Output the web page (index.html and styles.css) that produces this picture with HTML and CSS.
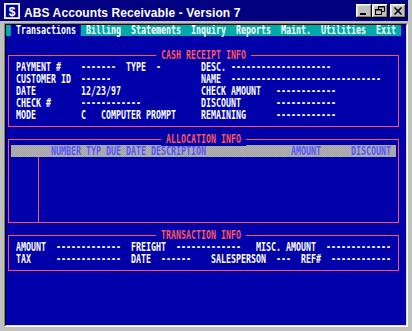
FILE: index.html
```html
<!DOCTYPE html>
<html lang="en">
<head>
  <meta charset="UTF-8">
  <title>ABS Accounts Receivable - Version 7</title>
  <link rel="stylesheet" href="styles.css">
</head>
<body>

  <div class="window">
    <div class="titlebar">
      <svg class="app-icon" viewBox="0 0 16 16" width="16" height="16">
        <rect x="0.5" y="0.5" width="15" height="15" fill="#c0c0c0" stroke="#fff"/>
        <rect x="2" y="2" width="12" height="12" fill="#0000aa"/>
        <text x="8" y="13" font-size="12" font-weight="bold" text-anchor="middle" fill="#fff" font-family="Liberation Sans, sans-serif">$</text>
      </svg>
      <span class="title">ABS Accounts Receivable - Version 7</span>
      <div class="caption-btns">
        <span class="btn">
          <svg viewBox="0 0 16 14" width="16" height="14"><rect x="4" y="9" width="6" height="2" fill="#000"/></svg>
        </span>
        <span class="btn">
          <svg viewBox="0 0 16 14" width="16" height="14" fill="none" stroke="#000">
            <path d="M6.5 5V2.5h6v5h-3"/><path d="M6 3h7"/>
            <rect x="3.5" y="5.5" width="6" height="5" fill="#c0c0c0"/><path d="M3 6h7"/>
          </svg>
        </span>
        <span class="btn close">
          <svg viewBox="0 0 16 14" width="16" height="14" stroke="#000" stroke-width="1.6"><path d="M4.5 3.5l7 7M11.5 3.5l-7 7"/></svg>
        </span>
      </div>
    </div>

    <div class="client">
      <div class="screen">
        <!-- frames drawn on the 80x25 cell grid -->
        <div class="box cash"></div>
        <div class="box alloc"></div>
        <div class="bar"></div>
        <div class="divider"></div>
        <div class="box trans"></div>

        <!-- text mode layer, one div per screen row -->
        <div class="text">
          <div class="menu"> <span class="sel"> Transactions </span> Billing  Statements  Inquiry  Reports  Maint.  Utilities  Exit </div>
          <div class="row"></div>
          <div class="row">                              <span class="ttl"> CASH RECEIPT INFO </span></div>
          <div class="row">  PAYMENT #    -------  TYPE  -        DESC. --------------------</div>
          <div class="row">  CUSTOMER ID  ------                  NAME  ------------------------------</div>
          <div class="row">  DATE         12/23/97                CHECK AMOUNT   ------------</div>
          <div class="row">  CHECK #      ------------            DISCOUNT       ------------</div>
          <div class="row">  MODE         C   COMPUTER PROMPT     REMAINING      ------------</div>
          <div class="row"></div>
          <div class="row">                               <span class="ttl"> ALLOCATION INFO </span></div>
          <div class="row hdr">         NUMBER TYP DUE DATE DESCRIPTION                 AMOUNT      DISCOUNT</div>
          <div class="row"></div>
          <div class="row"></div>
          <div class="row"></div>
          <div class="row"></div>
          <div class="row"></div>
          <div class="row"></div>
          <div class="row">                              <span class="ttl"> TRANSACTION INFO </span></div>
          <div class="row">  AMOUNT  -------------  FREIGHT  -------------   MISC. AMOUNT  -------------</div>
          <div class="row">  TAX     -------------  DATE  ------    SALESPERSON  ---  REF#  ------------</div>
        </div>
      </div>
    </div>
  </div>

</body>
</html>
```

FILE: styles.css
```css
body {
  margin: 0;
  background-color: #c0c0c0;
  font-family: 'Liberation Sans', Arial, sans-serif;
  overflow: hidden;
}

.titlebar {
  display: flex;
  align-items: center;
  height: 21px;
  width: 408px;
  background-color: #000080;
  color: #fff;
}
.app-icon {
  margin: 0 4px 0 4px;
  flex: none;
}
.title {
  flex: 1;
  font-size: 12px;
  font-weight: bold;
  letter-spacing: 0.1px;
  padding-top: 4px;
  white-space: nowrap;
}
.caption-btns {
  display: flex;
  margin-right: 2px;
}
.btn {
  display: block;
  width: 16px;
  height: 14px;
  background-color: #c0c0c0;
  box-shadow: inset -1px -1px #000, inset 1px 1px #fff, inset -2px -2px #808080, inset 2px 2px #dfdfdf;
}
.btn svg {
  display: block;
}
.btn.close {
  margin-left: 2px;
}

.client {
  margin: 2px 0 0 4px;
  width: 402px;
  border: 1px solid;
  border-color: #808080 #fff #fff #808080;
}

/* 80 x 25 text screen, 5px x 12px cells */
.screen {
  display: grid;
  grid-template-columns: repeat(80, 5px);
  grid-template-rows: repeat(25, 12px);
  background-color: #0000aa;
  border: 1px solid;
  border-color: #000 #dfdfdf #dfdfdf #000;
  overflow: hidden;
}

.box {
  grid-column: 1 / 80;
  margin: 6px 2px 6px 2px;
  border: 1px solid #ff5555;
}
.box.cash {
  grid-row: 3 / 10;
}
.box.alloc {
  grid-row: 10 / 18;
}
.box.trans {
  grid-row: 18 / 22;
}
.bar {
  grid-column: 2 / 79;
  grid-row: 11;
  background: repeating-conic-gradient(#b0b0b0 0 25%, #a4a4a4 0 50%) 0 0 / 2px 2px;
}
.divider {
  grid-column: 7;
  grid-row: 12 / 18;
  margin: 0 0 6px 2px;
  border-left: 1px solid #ff5555;
}

.text {
  grid-area: 1 / 1 / -1 / -1;
  width: 80ch;
  font-family: 'DejaVu Sans Mono', monospace;
  font-size: 12px;
  font-weight: bold;
  line-height: 12px;
  color: #fff;
  transform: scaleX(0.69208);
  transform-origin: 0 0;
}
.menu {
  width: 79ch;
  height: 11px;
  margin-bottom: 1px;
  line-height: 11px;
  white-space: pre;
  background-color: #00aaaa;
}
.menu .sel {
  display: inline-block;
  height: 11px;
  vertical-align: top;
  background-color: #0000aa;
}
.row {
  height: 12px;
  white-space: pre;
}
.ttl {
  color: #ff5555;
  background-color: #0000aa;
}
.hdr {
  color: #5555ff;
}
```
